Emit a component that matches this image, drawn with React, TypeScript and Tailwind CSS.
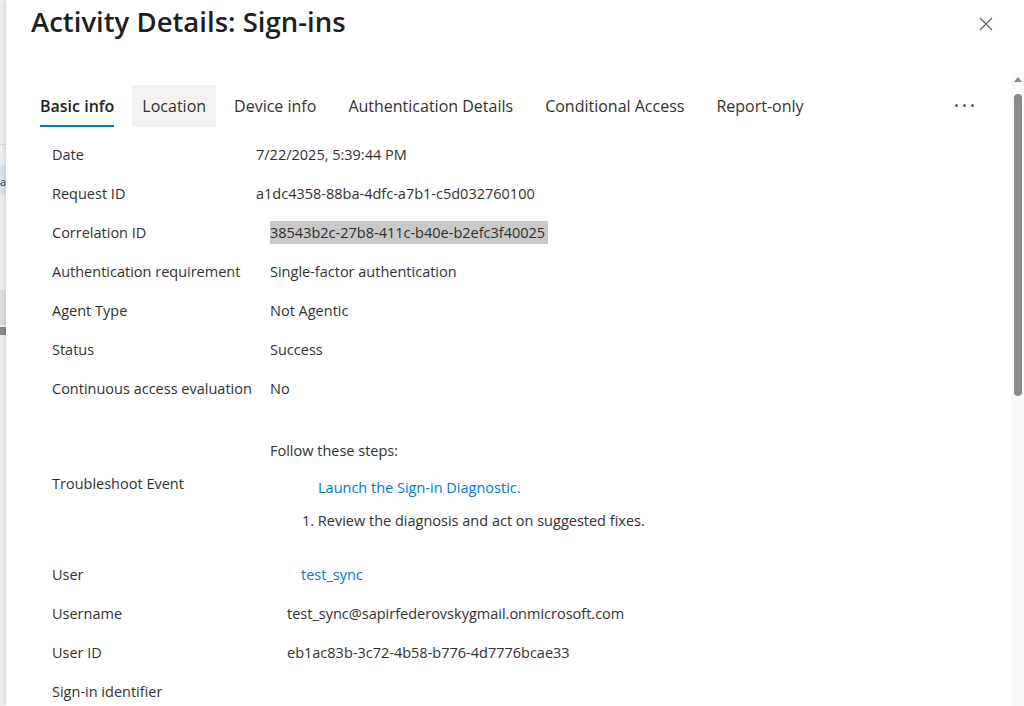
import React from 'react';

const font = { fontFamily: '"Open Sans", "Noto Sans", Arial, sans-serif' };

const tabs = ['Basic info', 'Location', 'Device info', 'Authentication Details', 'Conditional Access', 'Report-only'];

function Row({ label, children, indent = 'pl-[14px]' }: { label: string; children: React.ReactNode; indent?: string }) {
  return (
    <div className="flex items-center h-[39px] shrink-0">
      <div className="w-[204px] shrink-0 text-[#323130]">{label}</div>
      <div className={`${indent} text-[#323130]`}>{children}</div>
    </div>
  );
}

export default function App() {
  return (
    <div className="w-[1024px] h-[706px] overflow-hidden flex bg-white text-[14.5px]" style={font}>
      {/* background page peeking on the left */}
      <div className="w-[6px] shrink-0 flex flex-col bg-[#f3f3f3]">
        <div className="h-[145px] border-b border-[#dcdcdc]" />
        <div className="h-[20px]" />
        <div className="h-[30px] bg-[#dde8f4] text-[11px] leading-[34px] text-[#1e3a6e] overflow-hidden">a</div>
        <div className="h-[95px]" />
        <div className="h-[35px] bg-[#e2e2e2]" />
        <div className="h-[8px] bg-[#8a8a8a] mt-[2px]" />
      </div>

      {/* panel */}
      <div className="flex-1 flex shadow-[-2px_0_6px_rgba(0,0,0,0.12)]">
        <div className="flex-1 flex flex-col">
          <div className="flex items-start justify-between h-[85px] shrink-0 pl-[25px] pr-[19px]">
            <h1 className="text-[27.5px] font-semibold text-[#201f1e] leading-none mt-[8px]">Activity Details: Sign-ins</h1>
            <svg width="14" height="14" viewBox="0 0 14 14" className="mt-[17px]">
              <path d="M1 1 L13 13 M13 1 L1 13" stroke="#605e5c" strokeWidth="1.2" />
            </svg>
          </div>

          <div className="flex items-stretch h-[42px] shrink-0 pl-[24px] pr-[38px]">
            {tabs.map((t, i) => (
              <div
                key={t}
                className={`relative flex items-center px-[10px] text-[16px] ${i < 2 ? 'mr-[8px]' : 'mr-[12px]'} ${i === 0 ? 'font-semibold text-[#201f1e]' : 'text-[#323130]'} ${i === 1 ? 'bg-[#f3f2f1]' : ''}`}
              >
                {t}
                {i === 0 && <div className="absolute left-[10px] right-[10px] bottom-0 h-[2px] bg-[#0078d4]" />}
              </div>
            ))}
            <div className="ml-auto flex items-center gap-[5px] pb-[2px]">
              <span className="w-[3px] h-[3px] rounded-full bg-[#605e5c]" />
              <span className="w-[3px] h-[3px] rounded-full bg-[#605e5c]" />
              <span className="w-[3px] h-[3px] rounded-full bg-[#605e5c]" />
            </div>
          </div>

          <div className="flex flex-col pl-[46px] pt-[8px]">
            <Row label="Date" indent="">7/22/2025, 5:39:44 PM</Row>
            <Row label="Request ID" indent="">a1dc4358-88ba-4dfc-a7b1-c5d032760100</Row>
            <Row label="Correlation ID">
              <span className="bg-[#c8c8c8] py-[2px] pr-[3px]">38543b2c-27b8-411c-b40e-b2efc3f40025</span>
            </Row>
            <Row label="Authentication requirement">Single-factor authentication</Row>
            <Row label="Agent Type">Not Agentic</Row>
            <Row label="Status">Success</Row>
            <Row label="Continuous access evaluation">No</Row>

            <div className="flex items-center h-[147px] shrink-0 pt-[5px]">
              <div className="w-[204px] shrink-0 text-[#323130]">Troubleshoot Event</div>
              <div className="pl-[14px] flex flex-col text-[#323130]">
                <div className="h-[26px] flex items-center">Follow these steps:</div>
                <div className="h-[48px] flex items-center pl-[48px] text-[#0078d4]">Launch the Sign-in Diagnostic.</div>
                <div className="h-[18px] flex items-center pl-[32px]">1. Review the diagnosis and act on suggested fixes.</div>
              </div>
            </div>

            <Row label="User" indent="pl-[45px]">
              <span className="text-[#0078d4]">test_sync</span>
            </Row>
            <Row label="Username" indent="pl-[31px]">test_sync@sapirfederovskygmail.onmicrosoft.com</Row>
            <Row label="User ID" indent="pl-[31px]">eb1ac83b-3c72-4b58-b776-4d7776bcae33</Row>
            <Row label="Sign-in identifier">{''}</Row>
          </div>
        </div>

        {/* scrollbar */}
        <div className="w-[12px] shrink-0 flex flex-col pt-[73px] bg-white">
          <div className="flex-1 bg-[#fafafa] flex flex-col items-center">
            <svg width="8" height="6" viewBox="0 0 8 6" className="mt-[3px]">
              <path d="M0 6 L4 1 L8 6 Z" fill="#8a8a8a" />
            </svg>
            <div className="w-[8px] h-[302px] mt-[12px] rounded-[4px] bg-[#8a8a8a]" />
          </div>
        </div>
      </div>
    </div>
  );
}
